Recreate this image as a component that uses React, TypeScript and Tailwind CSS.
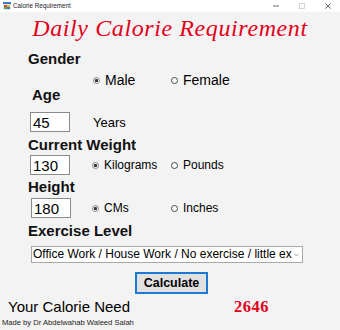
import React from 'react';

const sans = "font-['Liberation_Sans',Arial,sans-serif]";
const serif = "font-['Liberation_Serif','Times_New_Roman',serif]";

function Dot({ checked }: { checked: boolean }) {
    return (
        <svg width="7" height="7" viewBox="0 0 7 7" className="shrink-0">
            <circle cx="3.5" cy="3.5" r="3" fill="#fff" stroke={checked ? '#7a7a7a' : '#333'} strokeWidth="0.9" />
            {checked && <circle cx="3.5" cy="3.5" r="1.7" fill="#333" />}
        </svg>
    );
}

function Radio({ checked, label, size, width }: { checked: boolean; label: string; size: string; width?: string }) {
    return (
        <div className={`flex items-center ${width ?? ''}`}>
            <Dot checked={checked} />
            <span className={`ml-[5px] ${size}`}>{label}</span>
        </div>
    );
}

function Box({ value }: { value: string }) {
    return (
        <div className="w-[40px] h-[20px] bg-white border border-[#8a8a8a] pl-[2px] flex items-center text-[15px] leading-[15px]">
            {value}
        </div>
    );
}

function Label({ text, className }: { text: string; className?: string }) {
    return <div className={`font-bold text-[15px] leading-[15px] text-[#111] ${className ?? ''}`}>{text}</div>;
}

export default function App() {
    return (
        <div className={`w-[340px] h-[330px] bg-[#f3f3f3] text-black overflow-hidden ${sans}`}>
            {/* Title bar */}
            <div className="h-[12px] bg-white flex items-center">
                <svg width="8" height="8" viewBox="0 0 8 8" className="ml-[3px]">
                    <rect x="0" y="0" width="8" height="8" fill="#dfe8f3" />
                    <rect x="0" y="0" width="8" height="2" fill="#3b77c9" />
                    <rect x="1" y="3" width="3" height="2" fill="#e24b2b" />
                    <rect x="4" y="3" width="3" height="2" fill="#f3b92b" />
                    <rect x="1" y="5" width="3" height="2" fill="#4fae3c" />
                    <rect x="4" y="5" width="3" height="2" fill="#3b77c9" />
                </svg>
                <span className="ml-[2px] text-[6.3px] leading-[8px] text-[#222]">Calorie Requirement</span>
                <div className="ml-auto flex items-center h-full">
                    <svg width="6" height="6" viewBox="0 0 6 6" className="mr-[20px]">
                        <line x1="0" y1="3" x2="6" y2="3" stroke="#444" strokeWidth="0.8" />
                    </svg>
                    <svg width="6" height="6" viewBox="0 0 6 6" className="mr-[20px]">
                        <rect x="0.5" y="0.5" width="5" height="5" fill="none" stroke="#c8c8c8" strokeWidth="0.8" />
                    </svg>
                    <svg width="6" height="6" viewBox="0 0 6 6" className="mr-[9px]">
                        <path d="M0.3 0.3 L5.7 5.7 M5.7 0.3 L0.3 5.7" stroke="#444" strokeWidth="0.8" />
                    </svg>
                </div>
            </div>

            {/* Heading */}
            <div className={`mt-[4px] text-center italic text-[24px] leading-[25px] tracking-[0.6px] text-[#e3001b] ${serif}`}>
                Daily Calorie Requirement
            </div>

            <Label text="Gender" className="mt-[10px] pl-[28px]" />

            <div className="mt-[7px] h-[14px] pl-[93px] flex items-center">
                <Radio checked label="Male" size="text-[14px] leading-[14px]" width="w-[78px]" />
                <Radio checked={false} label="Female" size="text-[14px] leading-[14px]" />
            </div>

            <Label text="Age" className="pl-[32px]" />

            <div className="mt-[10px] h-[20px] pl-[30px] flex items-center">
                <Box value="45" />
                <span className="ml-[23px] text-[13px] leading-[13px]">Years</span>
            </div>

            <Label text="Current Weight" className="mt-[5px] pl-[28px]" />

            <div className="mt-[3px] h-[20px] pl-[30px] flex items-center">
                <Box value="130" />
                <div className="ml-[22px] flex items-center">
                    <Radio checked label="Kilograms" size="text-[12px] leading-[12px]" width="w-[79px]" />
                    <Radio checked={false} label="Pounds" size="text-[12px] leading-[12px]" />
                </div>
            </div>

            <Label text="Height" className="mt-[4px] pl-[28px]" />

            <div className="mt-[4px] h-[20px] pl-[31px] flex items-center">
                <Box value="180" />
                <div className="ml-[21px] flex items-center">
                    <Radio checked label="CMs" size="text-[12px] leading-[12px]" width="w-[79px]" />
                    <Radio checked={false} label="Inches" size="text-[12px] leading-[12px]" />
                </div>
            </div>

            <Label text="Exercise Level" className="mt-[5px] pl-[28px]" />

            <div className="mt-[8px] pl-[31px]">
                <div className="w-[272px] h-[17px] bg-white border border-[#a8a8a8] flex items-center pl-[1px] pr-[3px]">
                    <span className="text-[12px] leading-[13px] whitespace-nowrap flex-1">
                        Office Work / House Work / No exercise / little ex
                    </span>
                    <svg width="5" height="4" viewBox="0 0 5 4" className="ml-[2px]">
                        <path d="M0.5 1 L2.5 3 L4.5 1" fill="none" stroke="#777" strokeWidth="0.7" />
                    </svg>
                </div>
            </div>

            <div className="mt-[9px] pl-[135px]">
                <div className="w-[73px] h-[22px] bg-[#e1e1e1] border-2 border-[#1a7ad6] flex items-center justify-center font-bold text-[12.5px] leading-[13px]">
                    Calculate
                </div>
            </div>

            <div className="mt-[5px] pl-[8px] flex items-baseline">
                <span className="w-[226px] text-[15px] leading-[15px]">Your Calorie Need</span>
                <span className={`font-bold text-[16.5px] leading-[15px] tracking-[0.5px] text-[#e3001b] ${serif}`}>2646</span>
            </div>

            <div className="mt-[5px] pl-[2px] text-[7.6px] leading-[8px] text-[#222]">
                Made by Dr Abdelwahab Waleed Salah
            </div>
        </div>
    );
}
